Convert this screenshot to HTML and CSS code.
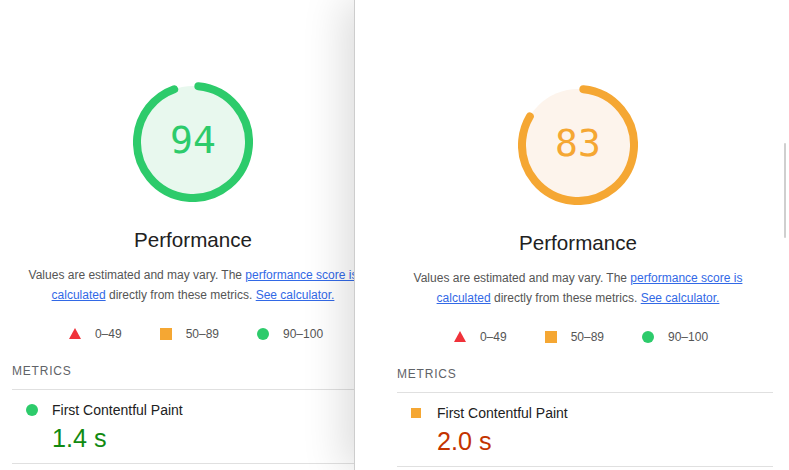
FILE: index.html
```html
<!doctype html>
<html lang="en">
 <head>
  <meta charset="UTF-8">
  <meta name="viewport" content="width=device-width, initial-scale=1.0">
  <title>Performance comparison</title>
  <link rel="stylesheet" href="styles.css">
 </head>
 <body>
  <main class="stage">
   <!-- before -->
   <section class="report report--left">
    <div class="summary">
     <div class="gauge gauge--pass">
      <svg class="gauge__svg" viewBox="0 0 120 120" width="120" height="120">
       <circle class="gauge__base" r="56" cx="60" cy="60"></circle>
       <circle class="gauge__arc" r="56" cx="60" cy="60" stroke-width="8" transform="rotate(-84.5 60 60)" stroke-dasharray="326.75 351.86"></circle>
      </svg>
      <div class="gauge__value">94</div>
     </div>
     <div class="gauge__label">Performance</div>
     <p class="desc">Values are estimated and may vary. The <a href="#">performance score is calculated</a> directly from these metrics. <a href="#">See calculator.</a></p>
     <div class="scale">
      <span class="scale__range scale__range--fail">0–49</span>
      <span class="scale__range scale__range--average">50–89</span>
      <span class="scale__range scale__range--pass">90–100</span>
     </div>
    </div>
    <div class="metrics">
     <div class="metrics__header">Metrics</div>
     <div class="metric metric--pass">
      <div class="metric__title">First Contentful Paint</div>
      <div class="metric__value">1.4&nbsp;s</div>
     </div>
    </div>
   </section>

   <!-- after -->
   <section class="report report--right">
    <div class="summary">
     <div class="gauge gauge--average">
      <svg class="gauge__svg" viewBox="0 0 120 120" width="120" height="120">
       <circle class="gauge__base" r="56" cx="60" cy="60"></circle>
       <circle class="gauge__arc" r="56" cx="60" cy="60" stroke-width="8" transform="rotate(-84.5 60 60)" stroke-dasharray="288.04 351.86"></circle>
      </svg>
      <div class="gauge__value">83</div>
     </div>
     <div class="gauge__label">Performance</div>
     <p class="desc">Values are estimated and may vary. The <a href="#">performance score is calculated</a> directly from these metrics. <a href="#">See calculator.</a></p>
     <div class="scale">
      <span class="scale__range scale__range--fail">0–49</span>
      <span class="scale__range scale__range--average">50–89</span>
      <span class="scale__range scale__range--pass">90–100</span>
     </div>
    </div>
    <div class="metrics">
     <div class="metrics__header">Metrics</div>
     <div class="metric metric--average">
      <div class="metric__title">First Contentful Paint</div>
      <div class="metric__value">2.0&nbsp;s</div>
     </div>
    </div>
    <div class="scrollbar"></div>
   </section>
  </main>
 </body>
</html>
```

FILE: styles.css
```css
html, body {
    margin: 0;
    height: 100%;
    overflow: hidden;
}
body {
    font-family: "Liberation Sans", Helvetica, Arial, sans-serif;
    background-color: #fff;
    color: #212121;
}
.stage {
    display: flex;
    height: 100vh;
}
.report {
    background-color: #fff;
    padding-top: 82px;
}
.report--left {
    flex: 0 0 354px;
    padding-left: 12px;
    overflow: hidden;
    box-sizing: border-box;
}
.report--right {
    flex: 1;
    position: relative;
    padding-top: 85px;
    padding-left: 42px;
    border-left: 1px solid #cdcdcd;
    box-shadow: -10px 0 40px rgba(0,0,0,0.14);
}
.summary {
    width: 362px;
    display: flex;
    flex-direction: column;
    align-items: center;
    text-align: center;
}
.gauge {
    position: relative;
    width: 120px;
    height: 120px;
}
.gauge__svg {
    display: block;
}
.gauge--pass {
    --ring: #2dcb6b;
    --ring-fill: #e8f8ee;
}
.gauge--average {
    --ring: #f5a733;
    --ring-fill: #fdf4ec;
}
.gauge__base {
    fill: var(--ring-fill);
    stroke: none;
}
.gauge__arc {
    fill: none;
    stroke: var(--ring);
    stroke-linecap: round;
}
.gauge__value {
    position: absolute;
    left: 0;
    right: 0;
    top: 39px;
    font-family: "DejaVu Sans Mono", Menlo, monospace;
    font-size: 38px;
    line-height: 38px;
    color: var(--ring);
}
.gauge__label {
    margin-top: 26px;
    font-size: 20.6px;
    line-height: 24px;
    color: #212121;
}
.desc {
    margin: 13px 0 0;
    font-size: 12px;
    line-height: 20px;
    color: #555;
}
.desc a {
    color: #3269e6;
    text-decoration: underline;
}
.scale {
    display: flex;
    align-items: center;
    gap: 38px;
    height: 20px;
    margin-top: 18.5px;
    padding-left: 6px;
    font-size: 12px;
    color: #555;
}
.scale__range {
    display: flex;
    align-items: center;
    white-space: nowrap;
}
.scale__range::before {
    content: '';
    display: block;
    width: 12px;
    height: 12px;
    margin-right: 14px;
}
.scale__range--fail::before {
    width: 0;
    height: 0;
    border-left: 6px solid transparent;
    border-right: 6px solid transparent;
    border-bottom: 11px solid #f0323a;
}
.scale__range--average::before {
    background-color: #f5a733;
}
.scale__range--pass::before {
    background-color: #2dcb6b;
    border-radius: 50%;
}
.metrics {
    width: 376px;
    margin-top: 17.3px;
}
.metrics__header {
    font-size: 12px;
    line-height: 20px;
    letter-spacing: 0.8px;
    text-transform: uppercase;
    color: #5f6368;
    padding-bottom: 8px;
    border-bottom: 1px solid #e0e0e0;
}
.metric {
    padding: 10px 0 10px 40px;
    border-bottom: 1px solid #e0e0e0;
}
.metric__title {
    position: relative;
    font-size: 14px;
    line-height: 20px;
    color: #212121;
}
.metric__title::before {
    content: '';
    position: absolute;
    left: -26px;
    top: 4px;
    width: 12px;
    height: 12px;
}
.metric--pass .metric__title::before {
    background-color: #2dcb6b;
    border-radius: 50%;
}
.metric--average .metric__title::before {
    top: 5px;
    width: 10px;
    height: 10px;
    background-color: #f5a733;
}
.metric__value {
    margin-top: 3px;
    font-size: 25.2px;
    line-height: 30px;
}
.metric--pass .metric__value {
    color: #118a11;
}
.metric--average .metric__value {
    color: #c33300;
}
.scrollbar {
    position: absolute;
    right: 3px;
    top: 143px;
    width: 2px;
    height: 95px;
    border-radius: 1px;
    background-color: #cfcfcf;
}
```
